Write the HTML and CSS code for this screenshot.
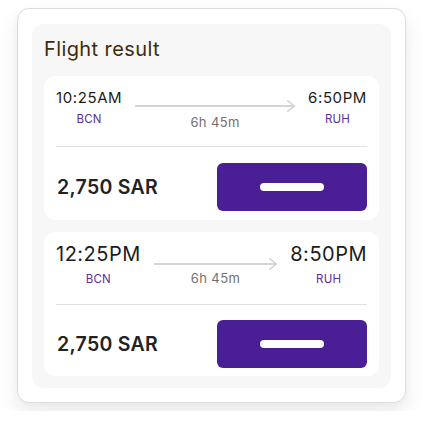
FILE: index.html
```html
<!DOCTYPE html>
<html lang="en">
<head>
<meta charset="utf-8">
<title>Flight result</title>
<link rel="stylesheet" href="styles.css">
</head>
<body>
<div class="outer">
  <div class="panel">
    <h1 class="title">Flight result</h1>
    <div class="cards">
      <div class="card card-a">
        <div class="route">
          <div class="stop">
            <div class="time">10:25AM</div>
            <div class="code">BCN</div>
          </div>
          <div class="mid">
            <div class="arrow"><span class="line"></span><svg class="head" width="8" height="12" viewBox="0 0 8 12"><polyline points="0.7,0.7 7.3,6 0.7,11.3" fill="none" stroke="#d3d3d8" stroke-width="1.5" stroke-linecap="round" stroke-linejoin="round"/></svg></div>
            <div class="dur">6h 45m</div>
          </div>
          <div class="stop">
            <div class="time">6:50PM</div>
            <div class="code">RUH</div>
          </div>
        </div>
        <div class="divider"></div>
        <div class="bottom">
          <div class="price">2,750 SAR</div>
          <button class="btn" type="button"><span class="pill"></span></button>
        </div>
      </div>
      <div class="card card-b">
        <div class="route">
          <div class="stop">
            <div class="time">12:25PM</div>
            <div class="code">BCN</div>
          </div>
          <div class="mid">
            <div class="arrow"><span class="line"></span><svg class="head" width="8" height="12" viewBox="0 0 8 12"><polyline points="0.7,0.7 7.3,6 0.7,11.3" fill="none" stroke="#d3d3d8" stroke-width="1.5" stroke-linecap="round" stroke-linejoin="round"/></svg></div>
            <div class="dur">6h 45m</div>
          </div>
          <div class="stop">
            <div class="time">8:50PM</div>
            <div class="code">RUH</div>
          </div>
        </div>
        <div class="divider"></div>
        <div class="bottom">
          <div class="price">2,750 SAR</div>
          <button class="btn" type="button"><span class="pill"></span></button>
        </div>
      </div>
    </div>
  </div>
</div>
</body>
</html>
```

FILE: styles.css
```css
* { box-sizing: border-box; }

html, body {
  background: #ffffff;
}

body {
  margin: 0;
  padding: 8px 17px;
  font-family: Inter, "Liberation Sans", sans-serif;
  color: #1f1f1f;
}

.outer {
  width: 389px;
  margin: 0 auto;
  background: #ffffff;
  border: 1px solid #dcdcdf;
  border-radius: 12px;
  padding: 15px 14px 14px;
  box-shadow: 0 12px 24px rgba(0, 0, 0, 0.08), 0 2px 6px rgba(0, 0, 0, 0.03);
}

.panel {
  background: #f7f7f7;
  border-radius: 12px;
  padding: 13px 12px 12px;
}

.title {
  margin: 0 0 15px;
  font-size: 20px;
  line-height: 24px;
  font-weight: 400;
  letter-spacing: 0.4px;
  color: #3e2c0c;
}

.cards {
  display: flex;
  flex-direction: column;
  gap: 12px;
}

.card {
  background: #ffffff;
  border-radius: 11px;
  padding: 12px 12px 9px;
}

.route {
  display: flex;
  align-items: flex-start;
  gap: 13px;
}

.stop {
  display: flex;
  flex-direction: column;
  align-items: center;
}

.time {
  font-size: 15px;
  line-height: 20px;
  letter-spacing: 0.6px;
  color: #1c1c1c;
  white-space: nowrap;
}

.code {
  margin-top: 4px;
  font-size: 11.5px;
  line-height: 14px;
  letter-spacing: 0.2px;
  color: #5a2ea6;
}

.mid {
  flex: 1;
  display: flex;
  flex-direction: column;
  align-items: center;
  padding-top: 12px;
}

.arrow {
  width: 100%;
  height: 12px;
  display: flex;
  align-items: center;
}

.line {
  flex: 1;
  height: 1.5px;
  background: #d3d3d8;
  margin-right: -7.5px;
}

.head {
  display: block;
  flex: none;
}

.dur {
  margin-top: 2px;
  font-size: 13px;
  line-height: 16px;
  letter-spacing: 0.4px;
  color: #717171;
}

.divider {
  height: 1px;
  background: #e0e0e4;
  margin: 16px 0;
}

.bottom {
  display: flex;
  align-items: center;
  justify-content: space-between;
}

.price {
  font-size: 19.5px;
  line-height: 24px;
  font-weight: 600;
  letter-spacing: 0.3px;
  color: #222222;
  padding-left: 1px;
}

.btn {
  width: 150px;
  height: 48px;
  border: none;
  border-radius: 6px;
  background: #4a1f95;
  display: flex;
  align-items: center;
  justify-content: center;
  padding: 0;
}

.pill {
  width: 64px;
  height: 8px;
  border-radius: 4px;
  background: #ffffff;
}

/* second card: larger times */
.card-b {
  padding-bottom: 8px;
}

.card-b .time {
  font-size: 20px;
  line-height: 20px;
  letter-spacing: 0.5px;
}

.card-b .code {
  margin-top: 8px;
}

.card-b .mid {
  padding-top: 14px;
}

.card-b .dur {
  margin-top: 0;
}

.card-b .divider {
  margin: 18px 0 15px;
}
```
